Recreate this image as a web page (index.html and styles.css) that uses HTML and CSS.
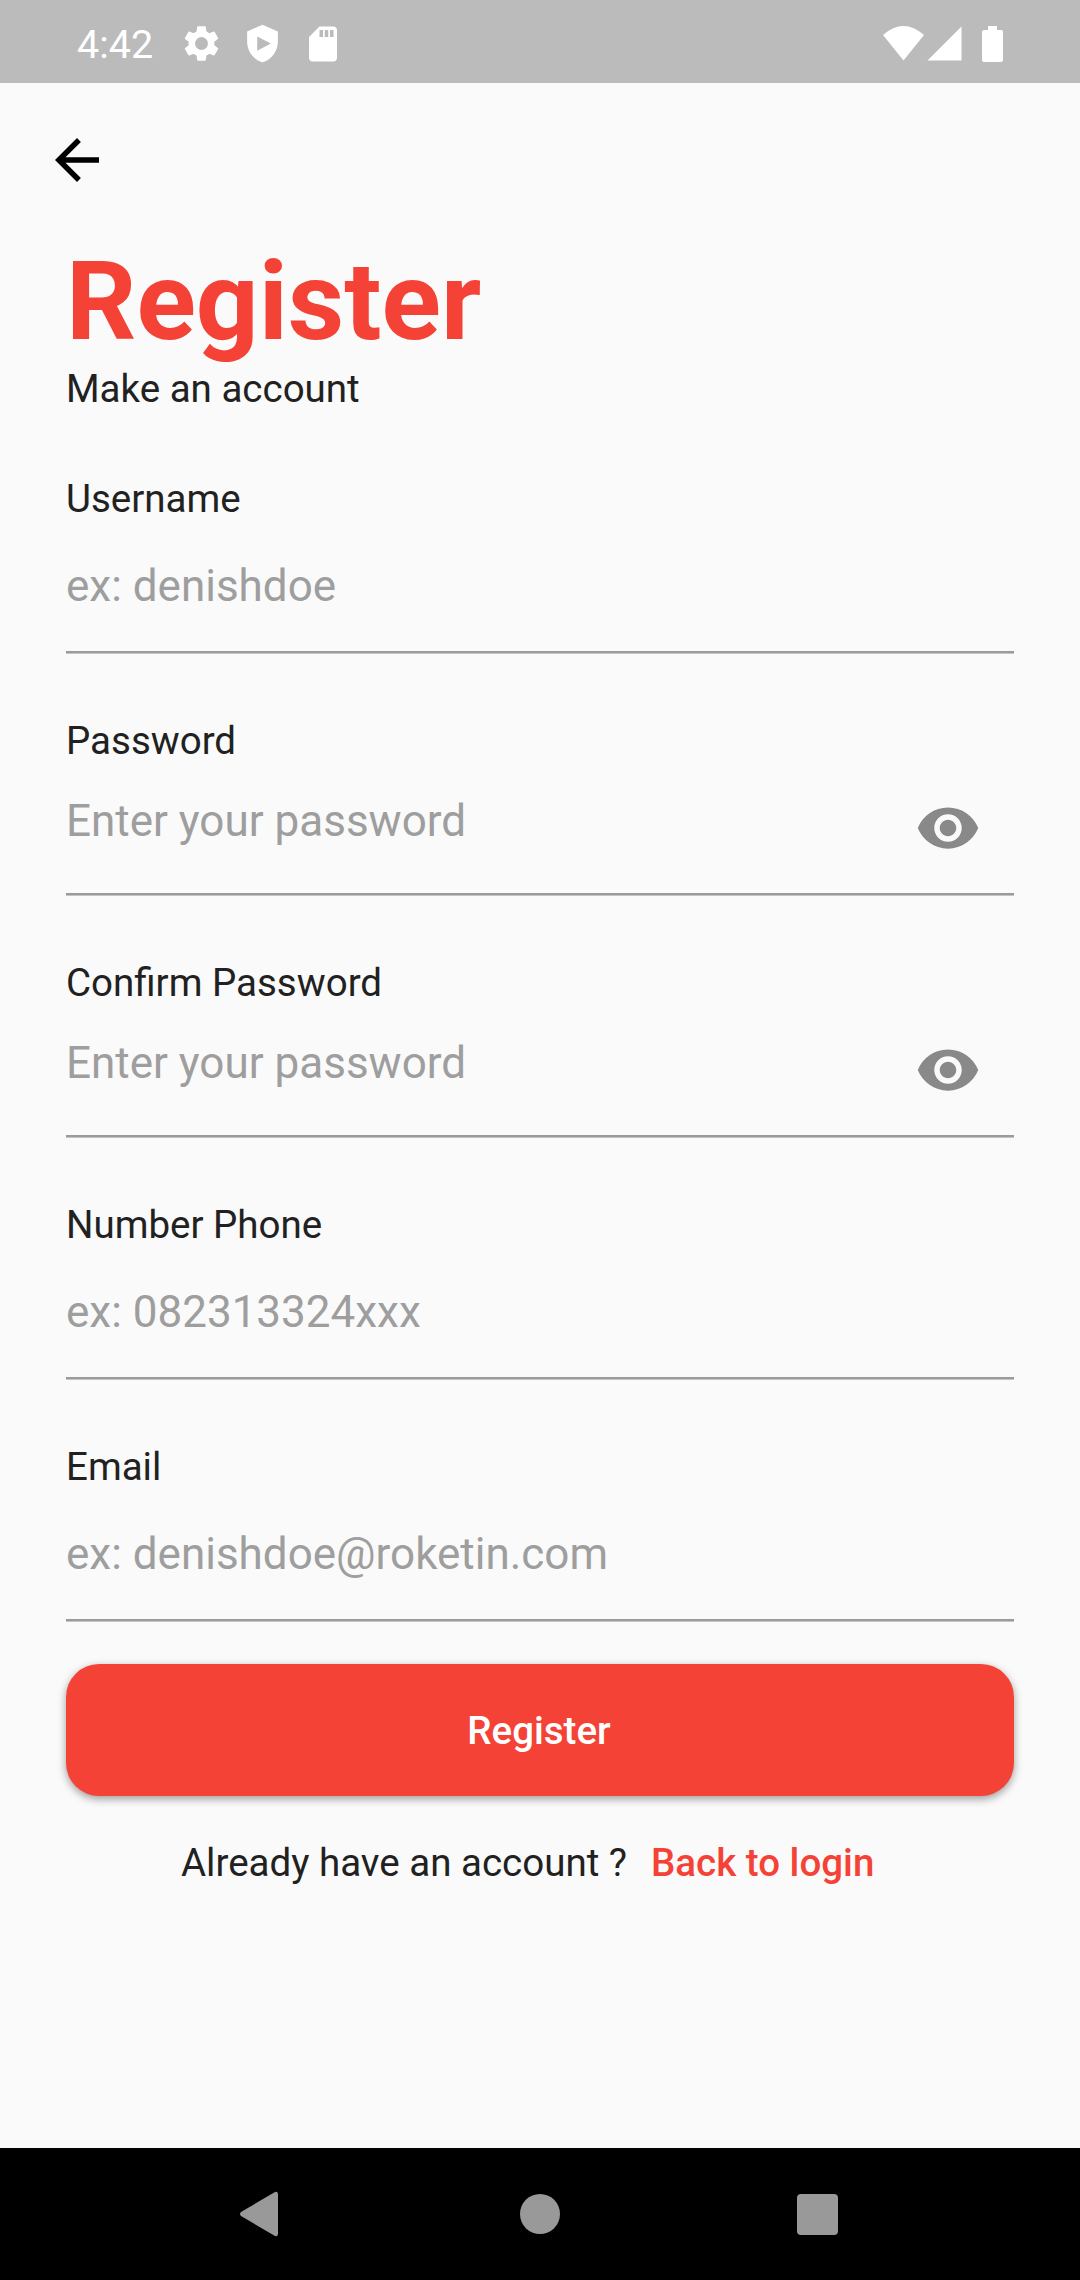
FILE: index.html
```html
<!DOCTYPE html>
<html lang="en">
<head>
<meta charset="utf-8">
<title>Register</title>
<link rel="stylesheet" href="styles.css">
</head>
<body>
<div class="screen">
  <header class="status">
    <span class="clock">4:42</span>
    <svg class="st-icon gear" viewBox="0 0 24 24"><path d="M19.14 12.94c.04-.3.06-.61.06-.94 0-.32-.02-.64-.07-.94l2.03-1.58a.49.49 0 0 0 .12-.61l-1.92-3.32a.49.49 0 0 0-.59-.22l-2.39.96c-.5-.38-1.03-.7-1.62-.94l-.36-2.54a.48.48 0 0 0-.48-.41h-3.84a.48.48 0 0 0-.47.41l-.36 2.54c-.59.24-1.13.57-1.62.94l-2.39-.96a.48.48 0 0 0-.59.22L2.74 8.87a.48.48 0 0 0 .12.61l2.03 1.58c-.05.3-.09.63-.09.94s.02.64.07.94l-2.03 1.58a.49.49 0 0 0-.12.61l1.92 3.32c.12.22.37.29.59.22l2.39-.96c.5.38 1.03.7 1.62.94l.36 2.54c.05.24.24.41.48.41h3.84c.24 0 .44-.17.47-.41l.36-2.54c.59-.24 1.13-.56 1.62-.94l2.39.96c.22.08.47 0 .59-.22l1.92-3.32a.48.48 0 0 0-.12-.61zM12 15.6A3.6 3.6 0 1 1 12 8.4a3.6 3.6 0 0 1 0 7.2z"/></svg>
    <svg class="st-icon shield" viewBox="0 0 24 24"><path fill-rule="evenodd" d="M12 1 3 5v6c0 5.550 3.840 10.740 9 12 5.160-1.260 9-6.450 9-12V5zM8.900 7.900v8.400L16.900 12z"/></svg>
    <svg class="st-icon sd" viewBox="0 0 24 24"><path d="M18 2h-8L4.020 8 4 20c0 1.100.9 2 2 2h12c1.100 0 2-.9 2-2V4c0-1.100-.9-2-2-2zm-6 6h-2V4h2zm3 0h-2V4h2zm3 0h-2V4h2z"/></svg>
    <svg class="signals" viewBox="0 0 120 36"><path d="M0 9Q20.500-9 41 9L20.500 34.500ZM78.500 .5V34.500H44.500ZM99 6Q99 4 101 4H105V0H114V4H118Q120 4 120 6V34Q120 36 118 36H101Q99 36 99 34Z"/></svg>
  </header>
  <main class="page">
    <svg class="back" viewBox="0 0 24 24"><path d="M20 11H7.830l5.590-5.590L12 4l-8 8 8 8 1.410-1.410L7.830 13H20z"/></svg>
    <h1 class="title">Register</h1>
    <p class="subtitle">Make an account</p>
    <div class="field"><span class="label">Username</span><div class="input"><span class="hint">ex: denishdoe</span></div></div>
    <div class="field"><span class="label">Password</span><div class="input raised"><span class="hint">Enter your password</span><svg class="eye" viewBox="0 0 24 24"><path d="M12 4.500C7 4.500 2.730 7.610 1 12c1.730 4.390 6 7.500 11 7.500s9.270-3.110 11-7.500c-1.730-4.390-6-7.500-11-7.500zM12 17c-2.760 0-5-2.240-5-5s2.240-5 5-5 5 2.240 5 5-2.240 5-5 5zm0-8c-1.660 0-3 1.340-3 3s1.340 3 3 3 3-1.340 3-3-1.340-3-3-3z"/></svg></div></div>
    <div class="field"><span class="label">Confirm Password</span><div class="input raised"><span class="hint">Enter your password</span><svg class="eye" viewBox="0 0 24 24"><path d="M12 4.500C7 4.500 2.730 7.610 1 12c1.730 4.390 6 7.500 11 7.500s9.270-3.110 11-7.500c-1.730-4.390-6-7.500-11-7.500zM12 17c-2.760 0-5-2.240-5-5s2.240-5 5-5 5 2.240 5 5-2.240 5-5 5zm0-8c-1.660 0-3 1.340-3 3s1.340 3 3 3 3-1.340 3-3-1.340-3-3-3z"/></svg></div></div>
    <div class="field"><span class="label">Number Phone</span><div class="input"><span class="hint">ex: 082313324xxx</span></div></div>
    <div class="field"><span class="label">Email</span><div class="input"><span class="hint">ex: denishdoe@roketin.com</span></div></div>
    <button class="submit">Register</button>
    <p class="login"><span>Already have an account ?</span><a class="link">Back to login</a></p>
  </main>
  <nav class="navbar">
    <svg class="navicons" viewBox="0 0 602 46"><path d="M39 3V43Q38.500 46 36 45L2 25Q0 23 2 21L36 1Q38.500 0 39 3Z"/><circle cx="301" cy="23" r="20"/><rect x="558" y="3" width="41" height="41" rx="4"/></svg>
  </nav>
</div>
</body>
</html>
```
FILE: styles.css
```css
* { box-sizing: border-box; }
body { margin: 0; font-family: Roboto, sans-serif; color: #212121; }
.screen { width: 1080px; height: 2280px; display: flex; flex-direction: column; background: #fafafa; }
.status { height: 83px; background: #bbb; display: flex; align-items: center; padding: 4px 77px 0; color: #fff; fill: #fff; }
.clock { font-size: 39.5px; width: 103px; padding-top: 2px; }
.st-icon { flex: none; }
.gear { width: 43px; height: 43px; }
.shield { width: 41px; height: 41px; margin-left: 19px; }
.sd { width: 42px; height: 42px; margin-left: 19px; }
.signals { width: 120px; height: 36px; margin-left: auto; }
.page { flex: 1; padding: 44px 66px 0; display: flex; flex-direction: column; }
.back { width: 66px; height: 66px; margin-left: -22px; fill: #000; }
.title { margin: 44px 0 0; font-size: 110px; line-height: 129px; font-weight: 700; color: #f44336; }
.subtitle { margin: 0; font-size: 38.5px; line-height: 45px; }
.field { height: 242px; padding-top: 65px; display: flex; flex-direction: column; }
.label { font-size: 38.5px; line-height: 45px; }
.input { flex: 1; display: flex; justify-content: space-between; border-bottom: 2px solid #9b9b9b; box-shadow: 0 1px #c4c4c4; padding-top: 39px; }
.hint { font-size: 44px; line-height: 52px; color: #9e9e9e; }
.raised { padding-top: 32px; }
.eye { width: 66px; height: 66px; margin-right: 33px; fill: #898989; }
.submit { margin-top: 43px; height: 132px; padding: 0 2px 0 0; border: 0; border-radius: 33px; background: #f44336; color: #fff; font: 500 38.5px Roboto, sans-serif; box-shadow: 0 3px 8px rgba(0, 0, 0, .38); }
.login { margin: 44px 0 0; padding-left: 115px; display: flex; gap: 24px; font-size: 38.5px; line-height: 45px; }
.link { color: #f44336; font-weight: 500; }
.navbar { height: 132px; background: #000; display: flex; align-items: center; justify-content: center; }
.navicons { width: 602px; height: 46px; fill: #999; }
```
